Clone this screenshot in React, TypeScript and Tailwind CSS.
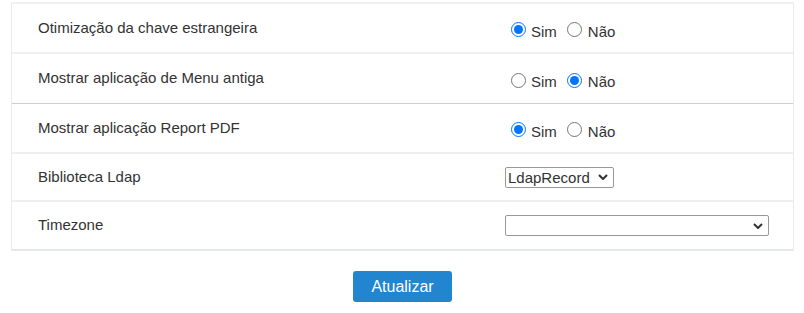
import { useState } from 'react'

type YesNo = 'sim' | 'nao'

function Chevron() {
  return (
    <svg viewBox="0 0 10 6" className="pointer-events-none absolute top-1/2 h-[6px] w-[10px] -translate-y-1/2 right-[6px]">
      <path d="M1 1l4 4 4-4" fill="none" stroke="#333" strokeWidth="2" />
    </svg>
  )
}

function RadioPair({ name, value, onChange }: { name: string; value: YesNo; onChange: (v: YesNo) => void }) {
  return (
    <div className="ml-[6px] mt-[3px] flex items-center text-[15px] text-[#333]">
      <label className="flex items-center">
        <input
          type="radio"
          name={name}
          checked={value === 'sim'}
          onChange={() => onChange('sim')}
          className="m-0 h-[15px] w-[15px] accent-[#0075ff]"
        />
        <span className="ml-[5px] mt-[5px]">Sim</span>
      </label>
      <label className="ml-[10px] flex items-center">
        <input
          type="radio"
          name={name}
          checked={value === 'nao'}
          onChange={() => onChange('nao')}
          className="m-0 h-[15px] w-[15px] accent-[#0075ff]"
        />
        <span className="ml-[6px] mt-[5px]">Não</span>
      </label>
    </div>
  )
}

function Row({ label, children, className }: { label: string; children: React.ReactNode; className: string }) {
  return (
    <div className={`grid grid-cols-[493px_1fr] items-center ${className}`}>
      <div className="pl-[26px] text-[15px] text-[#333]">{label}</div>
      <div>{children}</div>
    </div>
  )
}

export default function App() {
  const [fk, setFk] = useState<YesNo>('sim')
  const [oldMenu, setOldMenu] = useState<YesNo>('nao')
  const [pdf, setPdf] = useState<YesNo>('sim')

  return (
    <div className="h-[313px] w-[804px] bg-white pt-[2px]" style={{ fontFamily: '"Liberation Sans", Arial, sans-serif' }}>
      <div className="ml-[11px] w-[783px] border-x border-[#e9ecef] border-t-2 border-t-[#eef0f2] border-b-2 border-b-[#e6e9ec]">
        <Row label="Otimização da chave estrangeira" className="h-[50px] border-b-2 border-[#eef0f2]">
          <RadioPair name="fk" value={fk} onChange={setFk} />
        </Row>
        <Row label="Mostrar aplicação de Menu antiga" className="h-[50px] border-b border-[#cfcfcf]">
          <RadioPair name="menu" value={oldMenu} onChange={setOldMenu} />
        </Row>
        <Row label="Mostrar aplicação Report PDF" className="h-[50px] border-b-2 border-[#eef0f2]">
          <RadioPair name="pdf" value={pdf} onChange={setPdf} />
        </Row>
        <Row label="Biblioteca Ldap" className="h-[48px] border-b-2 border-[#eef0f2]">
          <div className="relative w-[109px]">
            <select className="block h-[21px] w-full appearance-none rounded-[2px] border border-[#999] bg-white pl-[2px] text-[15px] leading-[19px] text-[#333]">
              <option>LdapRecord</option>
            </select>
            <Chevron />
          </div>
        </Row>
        <Row label="Timezone" className="h-[47px]">
          <div className="relative w-[264px]">
            <select className="block h-[21px] w-full appearance-none rounded-[2px] border border-[#999] bg-white text-[15px] text-[#333]">
              <option></option>
            </select>
            <Chevron />
          </div>
        </Row>
      </div>
      <div className="mt-[20px] flex justify-center pl-[1px]">
        <button className="h-[31px] w-[99px] rounded-[3px] bg-[#2185d0] text-[16px] text-white">Atualizar</button>
      </div>
    </div>
  )
}
